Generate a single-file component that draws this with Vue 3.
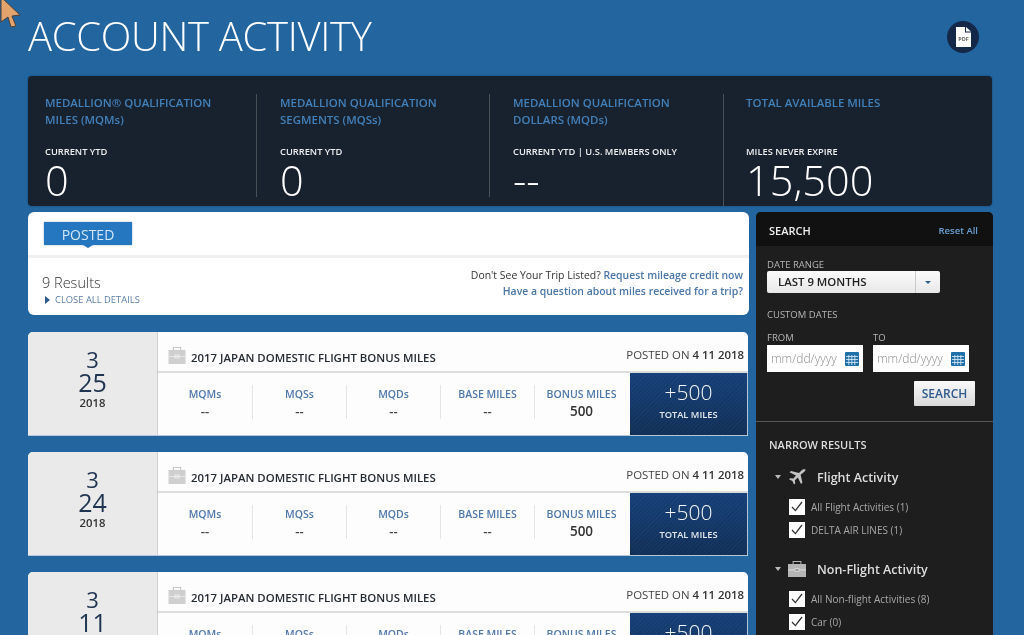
<script setup>
const summary = [
  { title: 'MEDALLION® QUALIFICATION MILES (MQMs)', sub: 'CURRENT YTD', value: '0' },
  { title: 'MEDALLION QUALIFICATION SEGMENTS (MQSs)', sub: 'CURRENT YTD', value: '0' },
  { title: 'MEDALLION QUALIFICATION DOLLARS (MQDs)', sub: 'CURRENT YTD | U.S. MEMBERS ONLY', value: '--' },
  { title: 'TOTAL AVAILABLE MILES', sub: 'MILES NEVER EXPIRE', value: '15,500' },
]
const activities = [
  { month: '3', day: '25', year: '2018' },
  { month: '3', day: '24', year: '2018' },
  { month: '3', day: '11', year: '2018' },
]
const stats = [
  { label: 'MQMs', value: '--' },
  { label: 'MQSs', value: '--' },
  { label: 'MQDs', value: '--' },
  { label: 'BASE MILES', value: '--' },
  { label: 'BONUS MILES', value: '500', strong: true },
]
const filters = [
  { name: 'Flight Activity', icon: 'plane', items: ['All Flight Activities (1)', 'DELTA AIR LINES (1)'] },
  { name: 'Non-Flight Activity', icon: 'case', items: ['All Non-flight Activities (8)', 'Car (0)'] },
]
</script>

<template>
  <div class="page">
    <svg class="cursor" width="24" height="30" viewBox="0 0 24 30">
      <path d="M1 -3 L20 15 L12 16 L16 26 L11 27 L8 17 L1 22 Z" fill="#e2a46c" stroke="#4a4038" stroke-width="1" />
    </svg>

    <header class="head">
      <h1>ACCOUNT ACTIVITY</h1>
      <div class="pdf">
        <svg width="15" height="20" viewBox="0 0 15 20">
          <path d="M0 0 H9 V5.5 H15 V20 H0 Z" fill="#fff" />
          <path d="M10 0 L15 4.6 H10 Z" fill="#fff" />
          <text x="7.5" y="14" text-anchor="middle" class="pdf-text">PDF</text>
        </svg>
      </div>
    </header>

    <section class="summary">
      <div v-for="s in summary" :key="s.title" class="sum-col">
        <div class="sum-title">{{ s.title }}</div>
        <div class="sum-sub">{{ s.sub }}</div>
        <div class="sum-val">{{ s.value }}</div>
      </div>
    </section>

    <div class="columns">
      <main class="main">
        <section class="results">
          <div class="tab-row">
            <div class="tab">POSTED</div>
          </div>
          <div class="res-row">
            <div>
              <div class="count">9 Results</div>
              <div class="close"><span class="tri"></span>CLOSE ALL DETAILS</div>
            </div>
            <div class="help">
              <div>Don't See Your Trip Listed? <a>Request mileage credit now</a></div>
              <div><a>Have a question about miles received for a trip?</a></div>
            </div>
          </div>
        </section>

        <article v-for="(a, i) in activities" :key="i" class="card">
          <div class="date">
            <div class="month">{{ a.month }}</div>
            <div class="day">{{ a.day }}</div>
            <div class="year">{{ a.year }}</div>
          </div>
          <div class="body">
            <div class="title-row">
              <svg class="case" width="18" height="17" viewBox="0 0 18 17">
                <path d="M6 3 V1 H12 V3 H13.2 V0 H4.8 V3 Z" fill="#c9c9c9" />
                <rect x="0.5" y="3" width="17" height="14" fill="#cfcfcf" />
                <rect x="0.5" y="9" width="17" height="1" fill="#e6e6e6" />
                <rect x="7" y="8" width="4" height="3" fill="none" stroke="#eee" stroke-width="1" />
              </svg>
              <div class="title">2017 JAPAN DOMESTIC FLIGHT BONUS MILES</div>
              <div class="posted">POSTED ON <b>4 11 2018</b></div>
            </div>
            <div class="stats">
              <div v-for="s in stats" :key="s.label" class="stat">
                <div class="stat-label">{{ s.label }}</div>
                <div class="stat-val" :class="{ strong: s.strong }">{{ s.value }}</div>
              </div>
              <div class="total">
                <div class="total-val">+500</div>
                <div class="total-label">TOTAL MILES</div>
              </div>
            </div>
          </div>
        </article>
      </main>

      <aside class="side">
        <div class="side-head">
          <span>SEARCH</span>
          <a>Reset All</a>
        </div>
        <div class="side-form">
          <label class="lbl">DATE RANGE</label>
          <div class="select">
            <span class="sel-text">LAST 9 MONTHS</span>
            <span class="sel-btn"><i></i></span>
          </div>
          <div class="lbl custom">CUSTOM DATES</div>
          <div class="dates">
            <div v-for="d in ['FROM', 'TO']" :key="d" class="date-field">
              <div class="lbl">{{ d }}</div>
              <div class="input">
                <span>mm/dd/yyyy</span>
                <svg width="14" height="14" viewBox="0 0 14 14">
                  <rect width="14" height="14" rx="1" fill="#1f6fa8" />
                  <path d="M1 4.5 H13 M1 7.5 H13 M1 10.5 H13 M3.8 3 V13 M6.8 3 V13 M9.8 3 V13" stroke="#cfe2ef" stroke-width="0.9" />
                </svg>
              </div>
            </div>
          </div>
          <div class="btn-row"><button class="search">SEARCH</button></div>
        </div>
        <div class="narrow">
          <div class="narrow-title">NARROW RESULTS</div>
          <div v-for="f in filters" :key="f.name" class="group">
            <div class="group-head">
              <i class="caret"></i>
              <svg v-if="f.icon === 'plane'" class="g-icon" width="18" height="16" viewBox="0 0 18 16">
                <path d="M17.5 0.5 C16 0 14.5 0.6 13.5 1.6 L11 4 L3 2 L1.5 3.2 L8 6.6 L5.4 9.6 L2.2 9.2 L1 10.2 L4.4 12 L6 15.6 L7.2 14.6 L6.9 11.2 L9.8 8.4 L13 15 L14.4 13.6 L12.6 5.8 L15.4 3.4 C16.6 2.4 17.8 1.4 17.5 0.5 Z" fill="#c4c4c4" />
              </svg>
              <svg v-else class="g-icon" width="18" height="16" viewBox="0 0 18 16">
                <path d="M5.6 3 V1 H12.4 V3 H13.4 V0 H4.6 V3 Z" fill="#b5b5b5" />
                <rect y="3" width="18" height="13" fill="#b5b5b5" />
                <rect y="8.4" width="18" height="1" fill="#dcdcdc" />
                <rect x="7" y="7.4" width="4" height="3" fill="#9a9a9a" stroke="#dcdcdc" stroke-width="0.8" />
              </svg>
              <span>{{ f.name }}</span>
            </div>
            <div v-for="it in f.items" :key="it" class="check-row">
              <span class="box">
                <svg width="12" height="11" viewBox="0 0 12 11"><path d="M1 6 L4.4 9.6 L11 1" fill="none" stroke="#333" stroke-width="1.3" /></svg>
              </span>
              <span class="check-label">{{ it }}</span>
            </div>
          </div>
        </div>
      </aside>
    </div>
  </div>
</template>

<style>
html, body { margin: 0; background: #22659f; overflow: hidden; }
</style>

<style scoped>
.page {
  position: relative;
  width: 1024px;
  height: 635px;
  overflow: hidden;
  box-sizing: border-box;
  padding-left: 28px;
  background: #22659f;
  font-family: "Open Sans", "Liberation Sans", sans-serif;
  color: #333;
  filter: blur(0.35px);
}
.cursor { position: absolute; left: 0; top: 0; }
.head {
  height: 76px;
  display: flex;
  width: 951px;
  justify-content: space-between;
}
h1 {
  margin: 11px 0 0;
  font-size: 40px;
  line-height: 50px;
  font-weight: 300;
  color: #fff;
  letter-spacing: -0.3px;
}
.pdf {
  width: 32px;
  height: 32px;
  margin-top: 21px;
  border-radius: 50%;
  background: #14294a;
  display: flex;
  align-items: center;
  justify-content: center;
}
.pdf-text { font: 700 5.5px "Open Sans", sans-serif; fill: #666; }
.summary {
  width: 964px;
  height: 130px;
  display: flex;
  background: #18222f;
  border-radius: 4px;
  box-sizing: border-box;
  padding-top: 18px;
  box-shadow: 0 0 2px #16406a;
}
.sum-col {
  box-sizing: border-box;
  width: 233px;
  padding-left: 23px;
  border-left: 1px solid #4a5058;
  height: 103px;
}
.sum-col:first-child { width: 228px; border-left: 0; padding-left: 17px; }
.sum-col:nth-child(3) { width: 234px; }
.sum-col:last-child { height: 112px; padding-left: 22px; }
.sum-title {
  width: 180px;
  height: 48px;
  padding-top: 1px;
  font-size: 11.45px;
  line-height: 16.5px;
  font-weight: 600;
  color: #4280ba;
}
.sum-sub {
  margin-top: 2px;
  font-size: 9.3px;
  line-height: 14px;
  font-weight: 600;
  color: #eee;
  white-space: nowrap;
}
.sum-val {
  font-size: 41.5px;
  line-height: 44px;
  font-weight: 300;
  color: #fff;
  margin-top: -1px;
}
.columns {
  display: flex;
  margin-top: 6px;
  gap: 8px;
}
.main { width: 720px; flex: none; }
.results {
  height: 103px;
  margin-right: -1px;
  background: #fff;
  border-radius: 6px;
  overflow: hidden;
}
.tab-row {
  height: 33px;
  border-bottom: 3px solid #f0f0f0;
  padding: 10px 0 0 16px;
}
.tab {
  position: relative;
  width: 88px;
  height: 23px;
  background: #2577c0;
  color: #d4e6f5;
  font-size: 14px;
  line-height: 26px;
  text-align: center;
  box-shadow: 0 0 2px #9cbad6;
}
.tab::after {
  content: "";
  position: absolute;
  left: 39px;
  bottom: -3px;
  border-left: 5px solid transparent;
  border-right: 5px solid transparent;
  border-top: 3px solid #2577c0;
}
.res-row {
  display: flex;
  justify-content: space-between;
  padding: 9px 6px 0 14px;
}
.count {
  margin-top: 6px;
  font-size: 14.5px;
  line-height: 20px;
  font-weight: 300;
  color: #333;
}
.close {
  display: flex;
  align-items: center;
  font-size: 9.4px;
  line-height: 13px;
  color: #5b7fa8;
}
.tri {
  width: 0;
  height: 0;
  margin: 0 5px 0 3px;
  border-left: 5px solid #2c5b8c;
  border-top: 4px solid transparent;
  border-bottom: 4px solid transparent;
}
.help {
  text-align: right;
  font-size: 10.45px;
  line-height: 16px;
  color: #333;
}
.help a { color: #4a76a8; font-weight: 600; }
.card {
  display: flex;
  height: 103px;
  margin-top: 17px;
  background: #fdfdfd;
  border-radius: 5px 5px 0 0;
  overflow: hidden;
  box-shadow: 0 1px 0 #b4c8da;
}
.date {
  width: 130px;
  flex: none;
  background: #eaeaea;
  border-right: 1px solid #cfcfcf;
  box-sizing: border-box;
  padding-top: 15px;
  text-align: center;
  color: #1f3450;
}
.month { font-size: 22px; line-height: 24px; }
.day { font-size: 25px; line-height: 23px; }
.year { font-size: 11.3px; line-height: 16px; font-weight: 600; color: #333; margin-top: 1px; }
.body { flex: 1; min-width: 0; display: flex; flex-direction: column; }
.title-row {
  height: 41px;
  box-sizing: border-box;
  border-bottom: 2px solid #dcdcdc;
  display: flex;
  align-items: center;
  padding: 9px 4px 0 10px;
}
.case { flex: none; margin-top: -2px; }
.title {
  margin-left: 5px;
  margin-top: 2px;
  font-size: 11.4px;
  font-weight: 600;
  color: #252b33;
  white-space: nowrap;
}
.posted {
  margin-left: auto;
  margin-top: -4px;
  font-size: 11.4px;
  color: #444;
}
.posted b { font-weight: 600; color: #333; }
.stats { flex: 1; display: flex; }
.stat {
  width: 94px;
  box-sizing: border-box;
  margin-top: 12px;
  height: 34px;
  text-align: center;
  border-left: 1px solid #e4e4e4;
}
.stat:first-child { border-left: 0; }
.stat-label {
  padding-top: 1px;
  font-size: 10.5px;
  line-height: 16px;
  font-weight: 600;
  color: #4f78ab;
  white-space: nowrap;
}
.stat-val {
  font-size: 13px;
  line-height: 18px;
  font-weight: 600;
  color: #444;
}
.stat-val.strong { color: #333; font-size: 13.5px; }
.total {
  margin-left: auto;
  width: 118px;
  height: 62px;
  background:
    repeating-linear-gradient(135deg, rgba(255,255,255,0.025) 0 1.5px, rgba(0,0,0,0.025) 1.5px 3px),
    linear-gradient(#16407a, #102f57);
  text-align: center;
  color: #fff;
  border-right: 1px solid #b4c8da;
  box-sizing: border-box;
  flex: none;
}
.total-val { font-size: 21px; line-height: 26px; margin-top: 6px; font-weight: 300; color: #f4f6f9; }
.total-label { font-size: 9.3px; line-height: 13px; font-weight: 600; margin-top: 3px; color: #e4e8ee; }
.side {
  width: 237px;
  flex: none;
  background: #1e1e1e;
  border-radius: 5px 5px 0 0;
  height: 430px;
  overflow: hidden;
}
.side-head {
  height: 34px;
  background: #111;
  display: flex;
  align-items: center;
  justify-content: space-between;
  padding: 3px 15px 0 13px;
  box-sizing: border-box;
  color: #eee;
  font-size: 11px;
  font-weight: 600;
}
.side-head a { color: #6aa0d4; font-size: 9.5px; }
.side-form {
  height: 176px;
  box-sizing: border-box;
  padding: 12px 0 0 11px;
  border-bottom: 1px solid #55575a;
}
.lbl {
  font-size: 9.5px;
  line-height: 14px;
  color: #b5b5b5;
  display: block;
}
.select {
  display: flex;
  width: 173px;
  height: 22px;
  margin-top: -1px;
  border-radius: 2px;
  overflow: hidden;
  background: linear-gradient(#fbfbfb, #e8e8e8);
}
.sel-text {
  flex: 1;
  padding-left: 11px;
  font-size: 11.4px;
  line-height: 22px;
  font-weight: 600;
  color: #222;
}
.sel-btn {
  width: 24px;
  border-left: 1px solid #c8c8c8;
  display: flex;
  align-items: center;
  justify-content: center;
}
.sel-btn i {
  border-left: 3px solid transparent;
  border-right: 3px solid transparent;
  border-top: 3px solid #2f5f90;
}
.custom { margin-top: 15px; }
.dates { display: flex; gap: 10px; margin-top: 9px; }
.date-field { width: 96px; }
.input {
  height: 27px;
  background: #fff;
  display: flex;
  align-items: center;
  justify-content: space-between;
  padding: 0 4px;
  box-sizing: border-box;
  font-size: 12px;
  color: #8c8c8c;
  font-weight: 300;
  white-space: nowrap;
}
.btn-row { width: 208px; display: flex; justify-content: flex-end; margin-top: 9px; }
.search {
  width: 61px;
  height: 25px;
  padding: 0;
  border: 0;
  border-radius: 1px;
  background: linear-gradient(#fafafa, #d9d9d9);
  color: #2e5a8c;
  font: 600 12px "Open Sans", sans-serif;
}
.narrow { padding: 15px 0 0 13px; }
.narrow-title { font-size: 11px; line-height: 16px; font-weight: 600; color: #ddd; }
.group { margin-top: 15px; }
.group + .group { margin-top: 19px; }
.group-head {
  display: flex;
  align-items: center;
  height: 18px;
  margin-left: 6px;
  color: #ddd;
  font-size: 12.5px;
  font-weight: 600;
}
.caret {
  border-left: 3.5px solid transparent;
  border-right: 3.5px solid transparent;
  border-top: 4px solid #bbb;
  margin-right: 7px;
}
.g-icon { flex: none; }
.group-head span { margin-left: 11px; }
.check-row { display: flex; align-items: center; height: 23px; margin-left: 20px; }
.group-head + .check-row { margin-top: 9px; }
.box {
  width: 16px;
  height: 16px;
  background: #fff;
  display: flex;
  align-items: center;
  justify-content: center;
  flex: none;
}
.check-label { margin-left: 6px; font-size: 10px; color: #a8a8a8; white-space: nowrap; }
</style>
